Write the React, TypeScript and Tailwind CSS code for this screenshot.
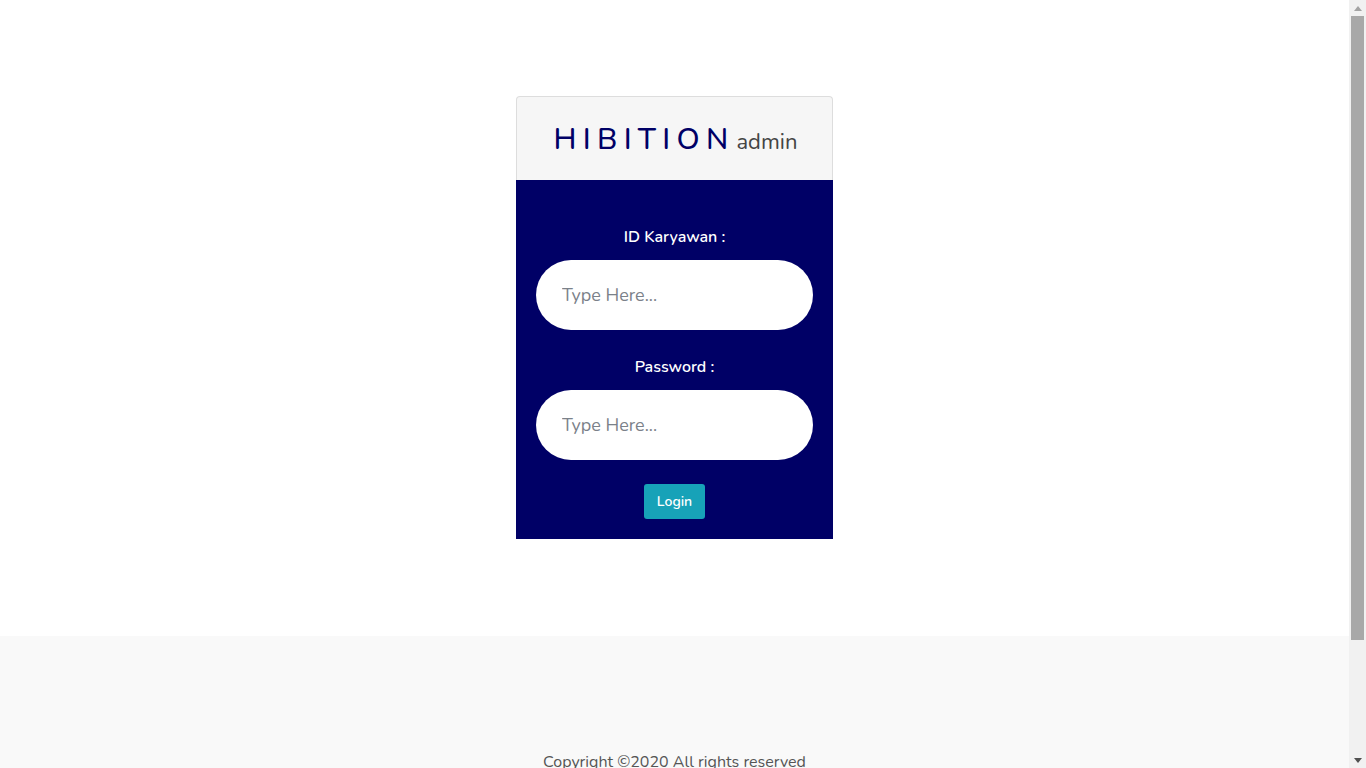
import React, { useState } from 'react';

const Field = ({ label, type, value, onChange }: { label: string; type: string; value: string; onChange: (v: string) => void }) => (
  <div className="flex flex-col items-center">
    <label className="text-white font-semibold text-[16px] leading-[22px] mb-[12px]">{label}</label>
    <input
      type={type}
      value={value}
      onChange={(e) => onChange(e.target.value)}
      placeholder="Type Here..."
      className="w-full h-[70px] rounded-full bg-white px-[26px] text-[18px] text-gray-700 placeholder:text-[#7b8189] focus:outline-none"
    />
  </div>
);

// browser-style scrollbar strip on the right
const Scrollbar = () => (
  <div className="w-[17px] h-full bg-[#f1f1f1] flex flex-col items-center shrink-0">
    <div className="h-[16px] flex items-center justify-center">
      <svg width="8" height="5" viewBox="0 0 8 5"><path d="M0 5 L4 0 L8 5 Z" fill="#a3a3a3" /></svg>
    </div>
    <div className="w-[13px] h-[624px] bg-[#a8a8a8]" />
    <div className="flex-1" />
    <div className="h-[16px] flex items-center justify-center">
      <svg width="8" height="5" viewBox="0 0 8 5"><path d="M0 0 L8 0 L4 5 Z" fill="#505050" /></svg>
    </div>
  </div>
);

const App = () => {
  const [id, setId] = useState('');
  const [password, setPassword] = useState('');

  return (
    <div className="h-screen flex overflow-hidden bg-white" style={{ fontFamily: 'Nunito, Lato, "Open Sans", sans-serif' }}>
      <div className="flex-1 flex flex-col">
        <main className="h-[636px] shrink-0 flex justify-center pt-[96px]">
          <div className="w-[317px] h-fit">
            <div className="h-[84px] flex items-center justify-center bg-[#f6f6f6] border border-[#dddddd] border-b-0 rounded-t-[4px]">
              <div className="flex items-baseline pt-[2px] pl-[2px]">
                <span className="text-[#000066] text-[30px] font-medium tracking-[6.3px] leading-none">HIBITION</span>
                <span className="text-[#444444] text-[22px] leading-none ml-[2px]">admin</span>
              </div>
            </div>
            <form
              onSubmit={(e) => e.preventDefault()}
              className="bg-[#000066] px-[20px] pt-[46px] pb-[20px] flex flex-col"
            >
              <Field label="ID Karyawan :" type="text" value={id} onChange={setId} />
              <div className="h-[26px]" />
              <Field label="Password :" type="password" value={password} onChange={setPassword} />
              <div className="flex justify-center mt-[24px]">
                <button type="submit" className="w-[61px] h-[35px] rounded-[3px] bg-[#17a2b8] text-white text-[14px] font-semibold">
                  Login
                </button>
              </div>
            </form>
          </div>
        </main>
        <footer className="bg-[#f9f9f9] flex-1 flex justify-center pt-[114px]">
          <p className="text-[#555555] text-[16px] leading-[24px]">Copyright ©2020 All rights reserved</p>
        </footer>
      </div>
      <Scrollbar />
    </div>
  );
};

export default App;
